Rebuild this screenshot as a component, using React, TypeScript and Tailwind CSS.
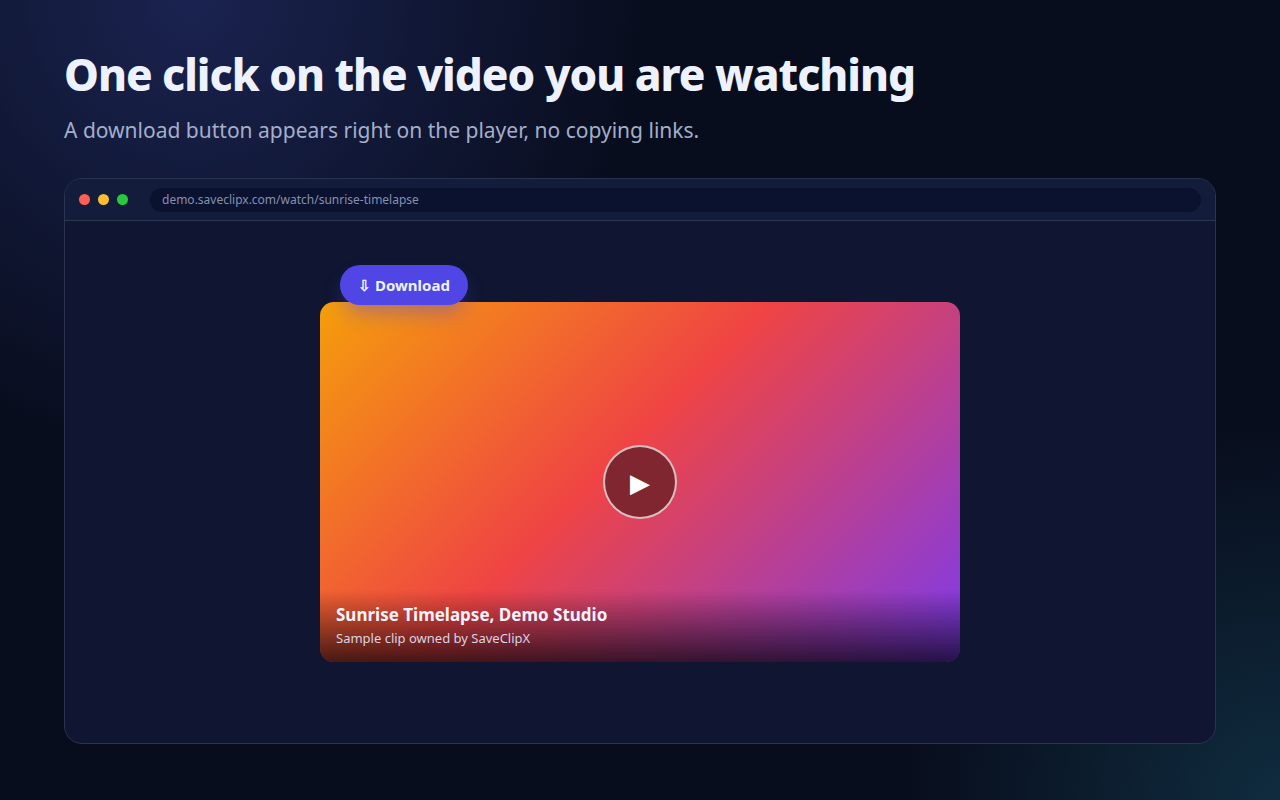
export default function App() {
  return (
    <div className="flex h-[800px] w-[1280px] flex-col overflow-hidden bg-[radial-gradient(circle_at_15%_0%,#1a2350_0%,rgba(26,35,80,0)_34%),radial-gradient(circle_at_100%_100%,#0f2c3e_0%,rgba(15,44,62,0)_25%),linear-gradient(#080d1d,#080d1d)] px-16 pt-[44px] font-['Noto_Sans',sans-serif]">
      <h1 className="text-[44px] leading-[60px] font-extrabold tracking-[-1px] text-[#eef2ff]">One click on the video you are watching</h1>
      <p className="mt-[11px] text-[21px] leading-[30px] text-[#a3aecb]">A download button appears right on the player, no copying links.</p>

      <div className="mt-[33px] flex h-[566px] flex-col overflow-hidden rounded-[18px] border border-[#2a3350] bg-[#101631]">
        <div className="flex h-[42px] shrink-0 items-center border-b border-[#2a3350] bg-[#141c3c] pr-[14px] pl-[14px]">
          <span className="size-[11px] rounded-full bg-[#ff5f57]" />
          <span className="ml-[8px] size-[11px] rounded-full bg-[#febc2e]" />
          <span className="ml-[8px] size-[11px] rounded-full bg-[#28c840]" />
          <div className="ml-[22px] flex h-[24px] flex-1 items-center rounded-full bg-[#0b1230] px-3 text-[12px] text-[#8590ad]">
            demo.saveclipx.com/watch/sunrise-timelapse
          </div>
        </div>

        <div className="flex flex-1 items-center justify-center">
          <div className="relative h-[360px] w-[640px] rounded-[14px] bg-[linear-gradient(135deg,#f59e0b,#ef4444_45%,#7c3aed)]">
            <button className="absolute top-[-37px] left-[20px] flex h-[40px] w-[128px] items-center justify-center rounded-full bg-[#4f46e5] text-[15px] font-bold text-[#eef2ff] shadow-[0_12px_20px_-4px_rgba(79,70,229,0.4)]">
              ⇩ Download
            </button>
            <div className="absolute top-[143px] left-[283px] flex size-[74px] items-center justify-center rounded-full border-2 border-white/70 bg-[#7f2630]">
              <span className="text-[26px] leading-none text-white">▶</span>
            </div>
            <div className="absolute inset-x-0 bottom-0 h-[72px] rounded-b-[14px] bg-[linear-gradient(transparent,rgba(0,0,0,0.7))] px-4 pt-[12px]">
              <div className="text-[17px] leading-[26px] font-bold text-[#f5f3ff]">Sunrise Timelapse, Demo Studio</div>
              <div className="mt-[1px] text-[13px] leading-[18px] text-[#d8d4e4]">Sample clip owned by SaveClipX</div>
            </div>
          </div>
        </div>
      </div>
    </div>
  );
}
